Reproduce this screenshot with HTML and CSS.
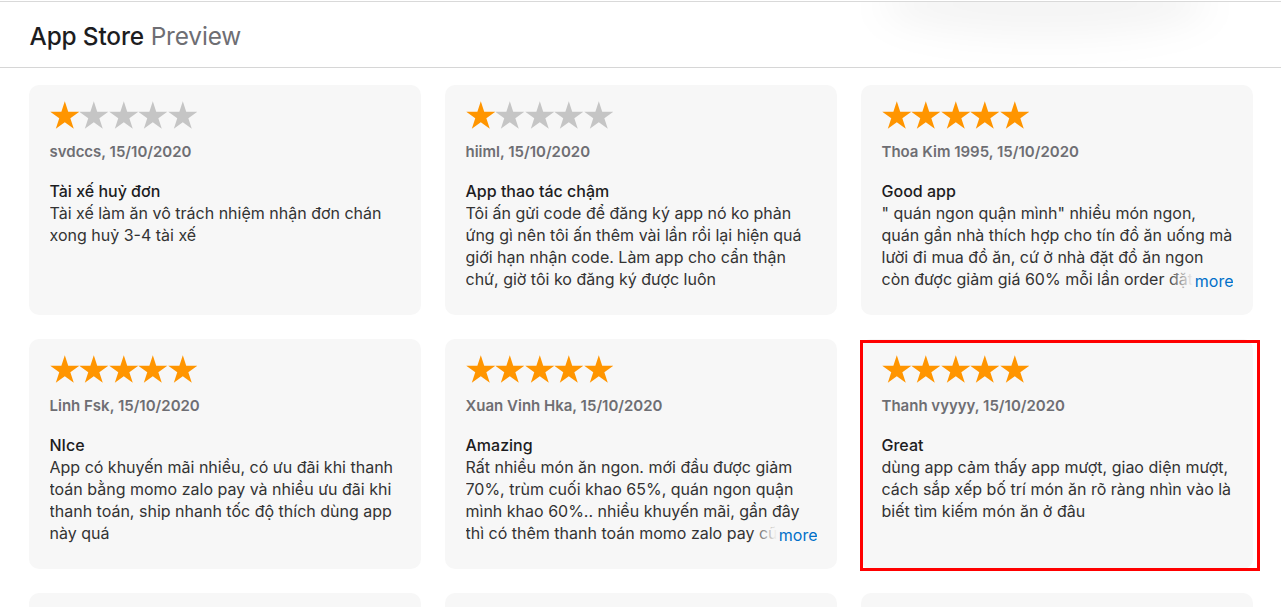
FILE: index.html
```html
<!DOCTYPE html>
<html lang="vi">
<head>
<meta charset="utf-8">
<title>App Store Preview</title>
<link rel="stylesheet" href="styles.css">
</head>
<body>
<svg class="defs" width="0" height="0" aria-hidden="true">
  <defs>
    <symbol id="star" viewBox="0 0 30 29">
      <polygon points="15,0 18.48,10.71 29.74,10.71 20.63,17.33 24.11,28.04 15,21.42 5.89,28.04 9.37,17.33 0.26,10.71 11.52,10.71"/>
    </symbol>
  </defs>
</svg>

<header class="header">
  <div class="header-inner">
    <h1 class="brand"><span class="brand-main">App Store</span> <span class="brand-sub">Preview</span></h1>
  </div>
</header>

<main class="reviews">
  <article class="card">
    <div class="stars">
      <svg class="star on"><use href="#star"/></svg><svg class="star"><use href="#star"/></svg><svg class="star"><use href="#star"/></svg><svg class="star"><use href="#star"/></svg><svg class="star"><use href="#star"/></svg>
    </div>
    <p class="author">svdccs, 15/10/2020</p>
    <h3 class="title">Tài xế huỷ đơn</h3>
    <div class="body"><p>Tài xế làm ăn vô trách nhiệm nhận đơn chán xong huỷ 3-4 tài xế</p></div>
  </article>

  <article class="card">
    <div class="stars">
      <svg class="star on"><use href="#star"/></svg><svg class="star"><use href="#star"/></svg><svg class="star"><use href="#star"/></svg><svg class="star"><use href="#star"/></svg><svg class="star"><use href="#star"/></svg>
    </div>
    <p class="author">hiiml, 15/10/2020</p>
    <h3 class="title">App thao tác chậm</h3>
    <div class="body"><p>Tôi ấn gửi code để đăng ký app nó ko phản ứng gì nên tôi ấn thêm vài lần rồi lại hiện quá giới hạn nhận code. Làm app cho cẩn thận chứ, giờ tôi ko đăng ký được luôn</p></div>
  </article>

  <article class="card">
    <div class="stars">
      <svg class="star on"><use href="#star"/></svg><svg class="star on"><use href="#star"/></svg><svg class="star on"><use href="#star"/></svg><svg class="star on"><use href="#star"/></svg><svg class="star on"><use href="#star"/></svg>
    </div>
    <p class="author">Thoa Kim 1995, 15/10/2020</p>
    <h3 class="title">Good app</h3>
    <div class="body clamped"><p>" quán ngon quận mình" nhiều món ngon, quán gần nhà thích hợp cho tín đồ ăn uống mà lười đi mua đồ ăn, cứ ở nhà đặt đồ ăn ngon còn được giảm giá 60% mỗi lần order đặt hàng, rất tiện lợi</p><a class="more" href="#">more</a></div>
  </article>

  <article class="card">
    <div class="stars">
      <svg class="star on"><use href="#star"/></svg><svg class="star on"><use href="#star"/></svg><svg class="star on"><use href="#star"/></svg><svg class="star on"><use href="#star"/></svg><svg class="star on"><use href="#star"/></svg>
    </div>
    <p class="author">Linh Fsk, 15/10/2020</p>
    <h3 class="title">NIce</h3>
    <div class="body"><p>App có khuyến mãi nhiều, có ưu đãi khi thanh toán bằng momo zalo pay và nhiều ưu đãi khi thanh toán, ship nhanh tốc độ thích dùng app này quá</p></div>
  </article>

  <article class="card">
    <div class="stars">
      <svg class="star on"><use href="#star"/></svg><svg class="star on"><use href="#star"/></svg><svg class="star on"><use href="#star"/></svg><svg class="star on"><use href="#star"/></svg><svg class="star on"><use href="#star"/></svg>
    </div>
    <p class="author">Xuan Vinh Hka, 15/10/2020</p>
    <h3 class="title">Amazing</h3>
    <div class="body clamped"><p>Rất nhiều món ăn ngon. mới đầu được giảm 70%, trùm cuối khao 65%, quán ngon quận mình khao 60%.. nhiều khuyến mãi, gần đây thì có thêm thanh toán momo zalo pay cũng rất nhiều ưu đãi</p><a class="more" href="#">more</a></div>
  </article>

  <article class="card highlighted">
    <div class="stars">
      <svg class="star on"><use href="#star"/></svg><svg class="star on"><use href="#star"/></svg><svg class="star on"><use href="#star"/></svg><svg class="star on"><use href="#star"/></svg><svg class="star on"><use href="#star"/></svg>
    </div>
    <p class="author">Thanh vyyyy, 15/10/2020</p>
    <h3 class="title">Great</h3>
    <div class="body"><p>dùng app cảm thấy app mượt, giao diện mượt, cách sắp xếp bố trí món ăn rõ ràng nhìn vào là biết tìm kiếm món ăn ở đâu</p></div>
  </article>

  <article class="card">
    <div class="stars">
      <svg class="star on"><use href="#star"/></svg><svg class="star on"><use href="#star"/></svg><svg class="star on"><use href="#star"/></svg><svg class="star on"><use href="#star"/></svg><svg class="star on"><use href="#star"/></svg>
    </div>
    <p class="author">Minh Anh, 15/10/2020</p>
    <h3 class="title">Tốt</h3>
    <div class="body"><p>Ứng dụng dễ dùng, giao hàng nhanh.</p></div>
  </article>

  <article class="card">
    <div class="stars">
      <svg class="star on"><use href="#star"/></svg><svg class="star on"><use href="#star"/></svg><svg class="star on"><use href="#star"/></svg><svg class="star on"><use href="#star"/></svg><svg class="star"><use href="#star"/></svg>
    </div>
    <p class="author">Hoang Nam, 15/10/2020</p>
    <h3 class="title">Ổn</h3>
    <div class="body"><p>Nhiều quán ngon, khuyến mãi hấp dẫn.</p></div>
  </article>

  <article class="card">
    <div class="stars">
      <svg class="star on"><use href="#star"/></svg><svg class="star on"><use href="#star"/></svg><svg class="star on"><use href="#star"/></svg><svg class="star on"><use href="#star"/></svg><svg class="star on"><use href="#star"/></svg>
    </div>
    <p class="author">Lan Pham, 15/10/2020</p>
    <h3 class="title">Tuyệt vời</h3>
    <div class="body"><p>Đặt đồ ăn rất tiện.</p></div>
  </article>
</main>
</body>
</html>
```

FILE: styles.css
```css
* { box-sizing: border-box; }

html, body {
  margin: 0;
  padding: 0;
  background: #ffffff;
}

body {
  font-family: Inter, "Noto Sans", "Liberation Sans", sans-serif;
  color: #1d1d1f;
  padding-top: 1px;
}

.defs {
  position: absolute;
  width: 0;
  height: 0;
  overflow: hidden;
}

.header {
  position: relative;
  height: 67px;
  border-top: 1px solid #d9d9d9;
  border-bottom: 1px solid #d6d6d6;
  background: #fff;
  overflow: hidden;
}

.header::before {
  content: "";
  position: absolute;
  left: 880px;
  top: -30px;
  width: 330px;
  height: 64px;
  border-radius: 50%;
  background: rgba(0, 0, 0, 0.045);
  filter: blur(18px);
}

.header-inner {
  position: relative;
  width: 1224px;
  margin: 0 auto;
  height: 100%;
  display: flex;
  align-items: center;
  padding-left: 1px;
}

.brand {
  margin: 0;
  font-size: 24.4px;
  line-height: 30px;
  letter-spacing: -0.15px;
  font-weight: 400;
  padding-top: 2px;
}

.brand-main {
  font-weight: 500;
  color: #1d1d1f;
}

.brand-sub {
  color: #6e6e73;
  font-weight: 400;
}

.reviews {
  width: 1224px;
  margin: 17px auto 0;
  display: grid;
  grid-template-columns: repeat(3, 1fr);
  gap: 24px;
}

.card {
  position: relative;
  background: #f7f7f7;
  border-radius: 10px;
  padding: 16px 20px 25px 21px;
  height: 230px;
}

.highlighted::after {
  content: "";
  position: absolute;
  left: -1px;
  top: 1px;
  right: -7px;
  bottom: -2px;
  border: 3px solid #ff0000;
  pointer-events: none;
}

.stars {
  display: flex;
  height: 30px;
}

.star {
  width: 29.6px;
  height: 29px;
  fill: #c5c5c5;
  flex: none;
}

.star.on {
  fill: #ff9500;
}

.author {
  margin: 11px 0 0;
  font-size: 15px;
  line-height: 20px;
  font-weight: 600;
  color: #6e6e73;
}

.title {
  margin: 18px 0 0;
  font-size: 16px;
  line-height: 22px;
  font-weight: 500;
  color: #1d1d1f;
}

.body {
  position: relative;
  max-height: 90px;
  overflow: hidden;
  font-size: 16px;
  line-height: 22px;
  color: #333333;
}

.body p {
  margin: 0;
}

.more {
  position: absolute;
  right: -1px;
  bottom: 0;
  line-height: 22px;
  padding-left: 28px;
  padding-top: 2px;
  color: #0070c9;
  text-decoration: none;
  background: linear-gradient(to right, rgba(247,247,247,0) 0, #f7f7f7 26px);
}
```
